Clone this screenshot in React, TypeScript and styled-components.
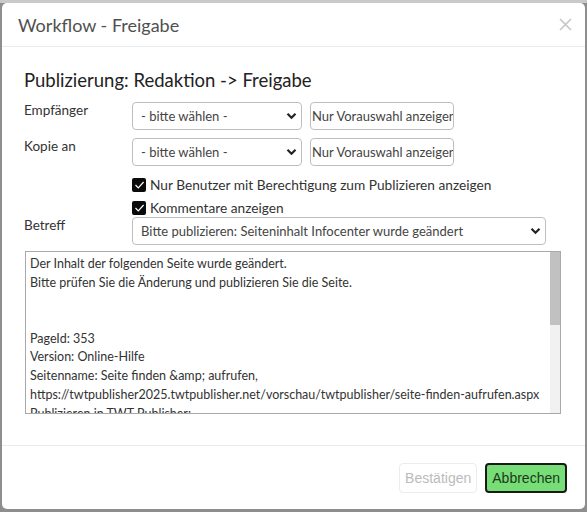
import React from "react";
import styled, { createGlobalStyle } from "styled-components";

const Global = createGlobalStyle`
  html, body { margin: 0; padding: 0; }
  body {
    width: 587px; height: 512px; overflow: hidden;
    background: #8e8e8e;
    font-family: Lato, "Open Sans", sans-serif;
    color: #212529;
  }
`;

const Backdrop = styled.div`
  height: 512px;
  padding: 3px 2px 3px 2px;
  box-sizing: border-box;
  background: linear-gradient(#c9c9c9 0 3px, #8e8e8e 3px);
`;

const Modal = styled.div`
  height: 100%;
  background: #fff;
  border-radius: 5px;
  display: flex;
  flex-direction: column;
  box-sizing: border-box;
`;

const Header = styled.div`
  height: 43px;
  display: flex;
  align-items: center;
  justify-content: space-between;
  padding: 0 10px 0 16px;
  border-bottom: 1px solid #e9ecef;
`;

const Title = styled.h5`
  margin: 0;
  font-size: 18px;
  font-weight: 400;
  color: #505050;
`;

const Close = styled.button`
  border: 0;
  background: none;
  padding: 0;
  width: 20px;
  height: 20px;
  display: flex;
  align-items: center;
  justify-content: center;
`;

const Body = styled.div`
  flex: 1;
  padding: 22px 24px 0 22px;
  display: flex;
  flex-direction: column;
`;

const Heading = styled.h4`
  margin: 0 0 11px 0;
  font-size: 18.5px;
  font-weight: 400;
  color: #222;
`;

const Row = styled.div<{ $gap?: number }>`
  display: grid;
  grid-template-columns: 108px 1fr;
  align-items: start;
  margin-bottom: ${(p) => p.$gap ?? 8}px;
`;

const Label = styled.div`
  font-size: 13.5px;
  color: #333;
`;

const Fields = styled.div`
  display: flex;
  gap: 8px;
`;

const SelectBox = styled.div<{ $w: number }>`
  width: ${(p) => p.$w}px;
  height: 28px;
  box-sizing: border-box;
  border: 1px solid #bfbfbf;
  border-radius: 4px;
  display: flex;
  align-items: center;
  justify-content: space-between;
  padding: 0 4px 0 8px;
  font-size: 13px;
  color: #444;
  background: #fff;
`;

const TextBox = styled.div`
  width: 144px;
  height: 28px;
  box-sizing: border-box;
  border: 1px solid #bfbfbf;
  border-radius: 4px;
  display: flex;
  align-items: center;
  padding: 0 0 0 1px;
  font-size: 13px;
  color: #444;
  overflow: hidden;
  white-space: nowrap;
`;

const Checks = styled.div`
  display: flex;
  flex-direction: column;
  gap: 6px;
  padding-left: 108px;
  margin: 2px 0 1px 0;
`;

const CheckRow = styled.label`
  display: flex;
  align-items: center;
  gap: 4px;
  font-size: 13.7px;
  color: #333;
`;

const Box = styled.span`
  width: 14px;
  height: 14px;
  border-radius: 2px;
  background: #0a0a0a;
  display: flex;
  align-items: center;
  justify-content: center;
`;

const TextArea = styled.div`
  position: relative;
  width: 536px;
  height: 163px;
  box-sizing: border-box;
  border: 1px solid #a9a9a9;
  margin-left: 1px;
  overflow: hidden;
  padding: 3px 14px 0 4px;
  font-size: 12.5px;
  line-height: 18.7px;
  color: #333;
`;

const Line = styled.div`
  white-space: nowrap;
  min-height: 18.7px;
`;

const ScrollTrack = styled.div`
  position: absolute;
  top: 0;
  right: 0;
  width: 10px;
  height: 100%;
  background: #f1f1f1;
`;

const Thumb = styled.div`
  width: 10px;
  height: 73px;
  background: #c1c1c1;
`;

const Footer = styled.div`
  height: 63px;
  border-top: 1px solid #e9ecef;
  display: flex;
  align-items: center;
  justify-content: flex-end;
  gap: 8px;
  padding: 0 18px 0 0;
`;

const Btn = styled.button<{ $primary?: boolean }>`
  height: 30px;
  box-sizing: border-box;
  font-family: "Liberation Sans", Arial, sans-serif;
  font-size: 14px;
  padding: 0 5px;
  border-radius: 4px;
  ${(p) =>
    p.$primary
      ? `background:#77dd77;border:2px solid #1a1a1a;color:#1c3a1c;`
      : `background:#fff;border:1px solid #ececec;color:#bbb;`}
`;

const Chevron = () => (
  <svg width="11" height="8" viewBox="0 0 11 8">
    <path d="M1.5 1.8 L5.5 5.8 L9.5 1.8" fill="none" stroke="#222" strokeWidth="2.2" />
  </svg>
);

const Check = () => (
  <svg width="11" height="10" viewBox="0 0 11 10">
    <path d="M1.5 5 L4.3 7.8 L9.6 2" fill="none" stroke="#fff" strokeWidth="1.2" />
  </svg>
);

export default function App() {
  const lines = [
    "Der Inhalt der folgenden Seite wurde geändert.",
    "Bitte prüfen Sie die Änderung und publizieren Sie die Seite.",
    "",
    "",
    "PageId: 353",
    "Version: Online-Hilfe",
    "Seitenname: Seite finden &amp; aufrufen,",
    "https://twtpublisher2025.twtpublisher.net/vorschau/twtpublisher/seite-finden-aufrufen.aspx",
    "Publizieren in TWT Publisher:",
  ];
  return (
    <>
      <Global />
      <Backdrop>
        <Modal>
          <Header>
            <Title>Workflow - Freigabe</Title>
            <Close aria-label="close">
              <svg width="13" height="13" viewBox="0 0 13 13">
                <path d="M1 1 L12 12 M12 1 L1 12" stroke="#c4c4c4" strokeWidth="1.5" />
              </svg>
            </Close>
          </Header>
          <Body>
            <Heading>Publizierung: Redaktion -&gt; Freigabe</Heading>
            <Row>
              <Label>Empfänger</Label>
              <Fields>
                <SelectBox $w={170}>
                  <span>- bitte wählen -</span>
                  <Chevron />
                </SelectBox>
                <TextBox>Nur Vorauswahl anzeigen</TextBox>
              </Fields>
            </Row>
            <Row>
              <Label>Kopie an</Label>
              <Fields>
                <SelectBox $w={170}>
                  <span>- bitte wählen -</span>
                  <Chevron />
                </SelectBox>
                <TextBox>Nur Vorauswahl anzeigen</TextBox>
              </Fields>
            </Row>
            <Checks>
              <CheckRow>
                <Box>
                  <Check />
                </Box>
                Nur Benutzer mit Berechtigung zum Publizieren anzeigen
              </CheckRow>
              <CheckRow>
                <Box>
                  <Check />
                </Box>
                Kommentare anzeigen
              </CheckRow>
            </Checks>
            <Row $gap={6}>
              <Label>Betreff</Label>
              <Fields>
                <SelectBox $w={414}>
                  <span>Bitte publizieren: Seiteninhalt Infocenter wurde geändert</span>
                  <Chevron />
                </SelectBox>
              </Fields>
            </Row>
            <TextArea>
              {lines.map((l, i) => (
                <Line key={i}>{l}</Line>
              ))}
              <ScrollTrack>
                <Thumb />
              </ScrollTrack>
            </TextArea>
          </Body>
          <Footer>
            <Btn>Bestätigen</Btn>
            <Btn $primary>Abbrechen</Btn>
          </Footer>
        </Modal>
      </Backdrop>
    </>
  );
}
